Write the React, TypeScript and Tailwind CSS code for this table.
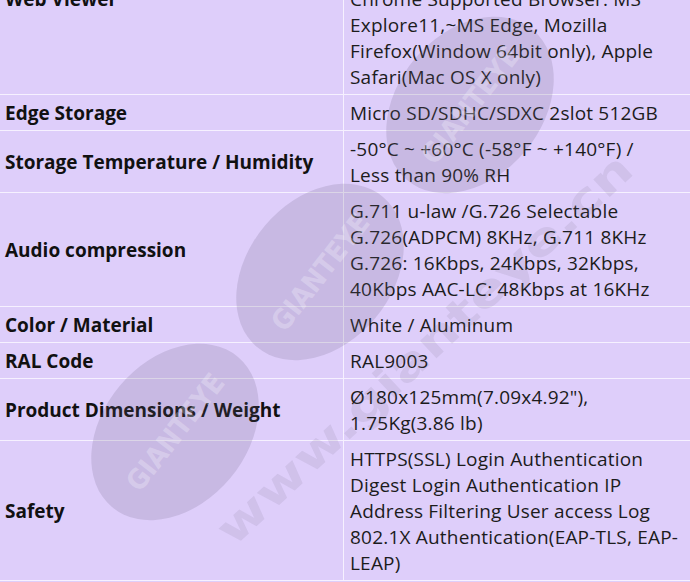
import React from "react";

type Row = { label: string; lines: string[] };

const rows: Row[] = [
  {
    label: "Web Viewer",
    lines: [
      "Supported OS: Windows 7/8/10,",
      "Mac OS X 10.10 or later",
      "Supported Browser: Google",
      "Chrome Supported Browser: MS",
      "Explore11,~MS Edge, Mozilla",
      "Firefox(Window 64bit only), Apple",
      "Safari(Mac OS X only)",
    ],
  },
  { label: "Edge Storage", lines: ["Micro SD/SDHC/SDXC 2slot 512GB"] },
  {
    label: "Storage Temperature / Humidity",
    lines: ["-50°C ~ +60°C (-58°F ~ +140°F) /", "Less than 90% RH"],
  },
  {
    label: "Audio compression",
    lines: [
      "G.711 u-law /G.726 Selectable",
      "G.726(ADPCM) 8KHz, G.711 8KHz",
      "G.726: 16Kbps, 24Kbps, 32Kbps,",
      "40Kbps AAC-LC: 48Kbps at 16KHz",
    ],
  },
  { label: "Color / Material", lines: ["White / Aluminum"] },
  { label: "RAL Code", lines: ["RAL9003"] },
  {
    label: "Product Dimensions / Weight",
    lines: ["Ø180x125mm(7.09x4.92\"),", "1.75Kg(3.86 lb)"],
  },
  {
    label: "Safety",
    lines: [
      "HTTPS(SSL) Login Authentication",
      "Digest Login Authentication IP",
      "Address Filtering User access Log",
      "802.1X Authentication(EAP-TLS, EAP-",
      "LEAP)",
    ],
  },
];

function Watermark() {
  const centers = [
    [470, 105],
    [320, 272],
    [175, 432],
  ];
  return (
    <svg
      className="pointer-events-none absolute inset-0"
      width={690}
      height={582}
      viewBox="0 0 690 582"
    >
      {centers.map(([cx, cy], i) => (
        <g key={i} transform={`translate(${cx} ${cy})`}>
          <ellipse
            cx={0}
            cy={0}
            rx={98}
            ry={72}
            transform="rotate(-50)"
            fill="rgba(105,95,125,0.19)"
          />
          <text
            x={0}
            y={10}
            transform="rotate(-52)"
            textAnchor="middle"
            fontFamily="'DejaVu Sans Condensed','DejaVu Sans',sans-serif"
            fontWeight={700}
            fontSize={28}
            textLength={140}
            lengthAdjust="spacingAndGlyphs"
            fill="rgba(255,255,255,0.26)"
          >
            GIANTEYE
          </text>
        </g>
      ))}
      <g transform="translate(425 350) rotate(-43)">
        <text
          x={0}
          y={14}
          textAnchor="middle"
          fontFamily="'DejaVu Sans Condensed','DejaVu Sans',sans-serif"
          fontWeight={700}
          fontSize={44}
          textLength={550}
          lengthAdjust="spacingAndGlyphs"
          fill="rgba(105,95,125,0.12)"
        >
          www.gianteye.cn
        </text>
      </g>
    </svg>
  );
}

export default function App() {
  return (
    <div
      className="relative h-[582px] w-[690px] overflow-hidden bg-[#decefa] text-[#161616]"
      style={{ fontFamily: "'Open Sans', 'Noto Sans', sans-serif" }}
    >
      <div className="-mt-[97px] flex flex-col">
        {rows.map((r) => (
          <div key={r.label} className="flex border-b border-[#f6f1ff]">
            <div className="flex w-[344px] shrink-0 items-center border-r border-[#f6f1ff] pl-[5px] text-[19px] font-bold leading-[26px] text-[#111]">
              {r.label}
            </div>
            <div className="flex-1 pb-[4px] pl-[6px] pt-[5px] text-[19px] leading-[26px] tracking-[0.2px] text-[#1c1c1c]">
              {r.lines.map((l, i) => (
                <div key={i} className="whitespace-nowrap">
                  {l}
                </div>
              ))}
            </div>
          </div>
        ))}
      </div>
      <Watermark />
    </div>
  );
}
